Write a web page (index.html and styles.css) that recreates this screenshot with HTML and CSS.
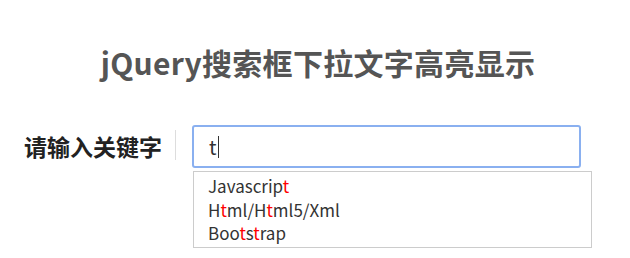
FILE: index.html
```html
<!DOCTYPE html>
<html lang="zh">
<head>
<meta charset="utf-8">
<link rel="stylesheet" href="styles.css">
</head>
<body>
<div class="page">
  <h1 class="title">jQuery搜索框下拉文字高亮显示</h1>
  <div class="form-row">
    <label class="label">请输入关键字</label>
    <span class="divider"></span>
    <div class="field">
      <div class="input"><span class="typed">t</span><span class="caret"></span></div>
      <ul class="suggest">
        <li>Javascrip<em>t</em></li>
        <li>H<em>t</em>ml/H<em>t</em>ml5/Xml</li>
        <li>Boo<em>t</em>s<em>t</em>rap</li>
      </ul>
    </div>
  </div>
</div>
</body>
</html>
```

FILE: styles.css
```css
* { box-sizing: border-box; }
html, body { margin: 0; padding: 0; background: #fff; }
body {
  font-family: "Noto Sans CJK SC", "Noto Sans", sans-serif;
  width: 630px;
  height: 258px;
  overflow: hidden;
}
.page { padding-top: 40px; }
.title {
  margin: 0;
  text-align: center;
  font-size: 30px;
  line-height: 44px;
  font-weight: 700;
  color: #555;
  letter-spacing: 0.3px;
  padding-left: 6px;
}
.form-row {
  display: flex;
  align-items: flex-start;
  margin-top: 41px;
  padding-left: 24px;
}
.label {
  font-size: 23px;
  font-weight: 700;
  color: #222;
  line-height: 43px;
  width: 151px;
}
.divider {
  width: 1px;
  height: 30px;
  margin-top: 5px;
  background: #ddd;
}
.field {
  margin-left: 16px;
  display: flex;
  flex-direction: column;
}
.input {
  width: 389px;
  height: 43px;
  border: 2px solid #8ab0f0;
  border-radius: 3px;
  padding-left: 15px;
  display: flex;
  align-items: center;
  font-size: 20px;
  color: #333;
}
.caret {
  width: 1px;
  height: 22px;
  background: #333;
  margin-left: 1px;
}
.suggest {
  list-style: none;
  margin: 3px 0 0 1px;
  padding: 2px 0 2px 14px;
  width: 399px;
  border: 1px solid #ccc;
  font-size: 17px;
  line-height: 23.5px;
  color: #333;
}
.suggest em {
  font-style: normal;
  color: #f00;
}
```
